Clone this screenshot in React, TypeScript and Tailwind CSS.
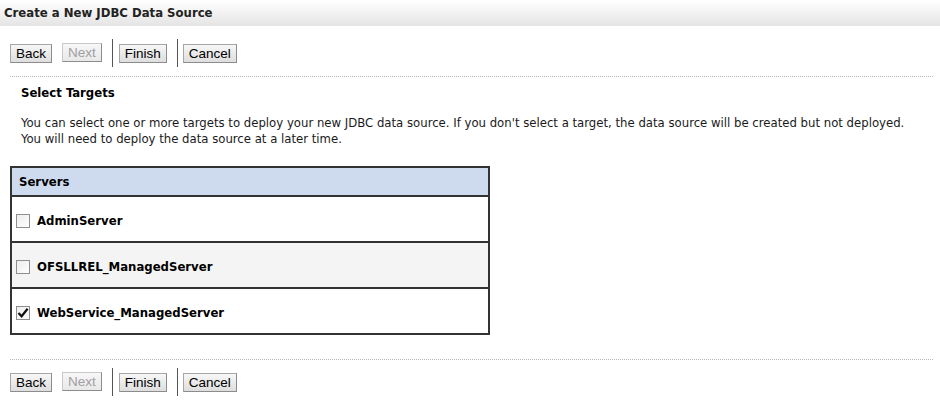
import React, { useState } from 'react';

const font = { fontFamily: '"DejaVu Sans Condensed", "DejaVu Sans", sans-serif' };

const WizardButton: React.FC<{ label: string; disabled?: boolean }> = ({ label, disabled }) => (
  <button
    disabled={disabled}
    className={`h-[19px] px-[5px] text-[13.5px] leading-[17px] border border-[#a6a6a6] border-b-[#8c8c8c] border-r-[#8c8c8c] bg-gradient-to-b from-[#f7f7f7] to-[#dedede] font-['Liberation_Sans',Arial,sans-serif] ${
      disabled ? 'text-[#a0a0a0] border-[#c8c8c8] from-[#f5f5f5] to-[#e8e8e8]' : 'text-black'
    }`}
  >
    {label}
  </button>
);

const ButtonBar: React.FC = () => (
  <div className="flex items-center h-[28px]">
    <WizardButton label="Back" />
    <div className="ml-[10px]">
      <WizardButton label="Next" disabled />
    </div>
    <div className="ml-[10px] mr-[6px] w-px h-[28px] bg-[#555]" />
    <WizardButton label="Finish" />
    <div className="ml-[10px] mr-[5px] w-px h-[28px] bg-[#555]" />
    <WizardButton label="Cancel" />
  </div>
);

const servers = ['AdminServer', 'OFSLLREL_ManagedServer', 'WebService_ManagedServer'];

export default function App() {
  const [checked, setChecked] = useState<Record<string, boolean>>({ WebService_ManagedServer: true });

  return (
    <div className="w-[940px] h-[419px] bg-white text-black text-[13px]" style={font}>
      <div className="h-[26px] pl-[4px] flex items-center font-bold text-[13px] text-[#222] bg-gradient-to-b from-white to-[#e4e4e4]">
        Create a New JDBC Data Source
      </div>

      <div className="px-[10px] pt-[13px]">
        <ButtonBar />
        <div className="mt-[9px] border-t border-dotted border-[#b8b8b8] mr-[-3px]" />

        <div className="pl-[11px] pt-[8px] font-bold text-[13px] leading-[16px]">Select Targets</div>
        <p className="pl-[11px] pt-[14px] leading-[16px] text-[#1a1a1a]">
          You can select one or more targets to deploy your new JDBC data source. If you don't select a target, the data source will be created but not deployed.
          <br />
          You will need to deploy the data source at a later time.
        </p>

        <table className="mt-[19px] w-[480px] border-collapse border-2 border-[#333]">
          <thead>
            <tr className="bg-[#cedbef] h-[29px]">
              <th className="text-left font-bold px-[7px] border-b-2 border-[#333]">Servers</th>
            </tr>
          </thead>
          <tbody>
            {servers.map((s, i) => (
              <tr key={s} className={`h-[46px] ${i === 1 ? 'bg-[#f4f4f4]' : 'bg-white'} border-b-2 border-[#333]`}>
                <td className="px-[4px] pt-[4px]">
                  <label className="flex items-center gap-[7px] font-bold text-[13px]">
                    <span
                      onClick={() => setChecked({ ...checked, [s]: !checked[s] })}
                      className="w-[14px] h-[14px] border border-[#8e8e8e] bg-gradient-to-br from-[#ececec] to-white flex items-center justify-center"
                    >
                      {checked[s] && (
                        <svg width="12" height="12" viewBox="0 0 12 12">
                          <path d="M1.5 6 L4.6 9.3 L10.6 1.8" fill="none" stroke="#111" strokeWidth="2.2" />
                        </svg>
                      )}
                    </span>
                    {s}
                  </label>
                </td>
              </tr>
            ))}
          </tbody>
        </table>

        <div className="mt-[24px] border-t border-dotted border-[#b8b8b8] mr-[-3px]" />
        <div className="mt-[8px]">
          <ButtonBar />
        </div>
      </div>
    </div>
  );
}
